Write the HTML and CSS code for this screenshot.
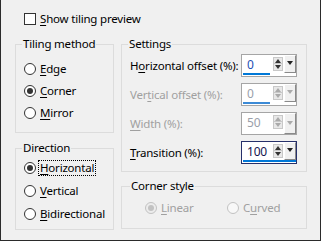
FILE: index.html
```html
<!DOCTYPE html>
<html lang="en">

<head>
  <meta charset="UTF-8">
  <title>Seamless tiling</title>
  <link rel="stylesheet" href="styles.css">
</head>

<body>
  <div class="dialog">
    <label class="check-row">
      <span class="check"></span>
      <span><u>S</u>how tiling preview</span>
    </label>

    <div class="columns">
      <div class="col col-left">
        <fieldset class="group tiling">
          <legend>Tiling method</legend>
          <label class="opt"><span class="radio"></span><span><u>E</u>dge</span></label>
          <label class="opt"><span class="radio on"></span><span><u>C</u>orner</span></label>
          <label class="opt"><span class="radio"></span><span><u>M</u>irror</span></label>
        </fieldset>

        <fieldset class="group direction">
          <legend>Direction</legend>
          <label class="opt"><span class="radio on"></span><span class="focus-ring"><u>H</u>orizontal</span></label>
          <label class="opt"><span class="radio"></span><span><u>V</u>ertical</span></label>
          <label class="opt"><span class="radio"></span><span><u>B</u>idirectional</span></label>
        </fieldset>
      </div>

      <div class="col col-right">
        <fieldset class="group settings">
          <legend>Settings</legend>
          <div class="rows">
            <span class="lbl">H<u>o</u>rizontal offset (%):</span>
            <div class="spin">
              <div class="spin-row">
                <span class="val">0</span>
                <span class="arrows"><i class="up"></i><i class="down"></i></span>
                <span class="drop"><i></i></span>
              </div>
              <i class="bar"></i>
            </div>

            <span class="lbl off">Ver<u>t</u>ical offset (%):</span>
            <div class="spin off">
              <div class="spin-row">
                <span class="val">0</span>
                <span class="arrows"><i class="up"></i><i class="down"></i></span>
                <span class="drop"><i></i></span>
              </div>
              <i class="bar"></i>
            </div>

            <span class="lbl off"><u>W</u>idth (%):</span>
            <div class="spin off">
              <div class="spin-row">
                <span class="val">50</span>
                <span class="arrows"><i class="up"></i><i class="down"></i></span>
                <span class="drop"><i></i></span>
              </div>
            </div>

            <span class="lbl"><u>T</u>ransition (%):</span>
            <div class="spin focus">
              <div class="spin-row">
                <span class="val">100</span>
                <span class="arrows"><i class="up"></i><i class="down"></i></span>
                <span class="drop"><i></i></span>
              </div>
              <i class="bar"></i>
            </div>
          </div>
        </fieldset>

        <fieldset class="group corner">
          <legend>Corner style</legend>
          <div class="pair">
            <label class="opt off"><span class="radio on"></span><span><u>L</u>inear</span></label>
            <label class="opt off"><span class="radio"></span><span>C<u>u</u>rved</span></label>
          </div>
        </fieldset>
      </div>
    </div>
  </div>
</body>

</html>
```

FILE: styles.css
```css
* {
  box-sizing: border-box;
}

body {
  margin: 0;
  font-family: "Noto Sans", "Open Sans", sans-serif;
  font-size: 11.5px;
  letter-spacing: -0.2px;
  line-height: 16px;
  color: #000;
}

u {text-decoration-thickness: 1px; text-underline-offset: 2px}

.dialog {
  width: 321px;
  height: 241px;
  background-color: #f0f0f0;
  border: 1px solid #2b2b2b;
  border-top: none;
  padding: 11px 13px 0 14px;
}

/* checkbox at the top */
.check-row {
  display: flex;
  align-items: center;
  gap: 4px;
  margin-left: 9px;
  height: 16px;
}
.check {
  width: 12px;
  height: 12px;
  border: 1px solid #333;
  background-color: #fff;
}

.columns {
  display: flex;
  gap: 7px;
  margin-top: 9px;
}
.col-left {width: 100px}
.col-right {width: 186px}

/* group boxes */
.group {
  margin: 0;
  min-width: 0;
  border: 1px solid #dcdcdc;
  padding: 0 8px;
}
.group legend {
  padding: 0 1px;
  margin-left: -2px;
  line-height: 16px;
}
.tiling {padding-top: 6px; padding-bottom: 8px}
.direction {margin-top: 7px; padding-bottom: 4px}
.settings {padding: 2px 9px 7px 8px}
.corner {margin-top: 6px; padding: 4px 10px 10px}

/* radio buttons */
.opt {
  display: flex;
  align-items: center;
  gap: 4px;
  height: 22px;
}
.direction .opt {height: 23px}
.radio {
  width: 12px;
  height: 12px;
  flex: none;
  display: grid;
  place-items: center;
  border: 1px solid #333;
  border-radius: 50%;
  background-color: #fff;
}
.radio.on::after {
  content: '';
  width: 6px;
  height: 6px;
  border-radius: 50%;
  background-color: #333;
}
.focus-ring {
  outline: 1px dotted #000;
  outline-offset: 0;
  padding: 0 1px;
  margin-left: -1px;
  line-height: 14px;
}

.pair {
  display: grid;
  grid-template-columns: 82px 82px;
  margin-left: 13px;
}
.pair .opt {height: 20px}
.opt.off {color: #a0a0a0}
.opt.off .radio {border-color: #c2c2c2; background-color: #f8f8f8}
.opt.off .radio.on {background-color: #ececec}
.opt.off .radio.on::after {background-color: #c2c2c2}

/* settings rows */
.rows {
  display: grid;
  grid-template-columns: 1fr 56px;
  row-gap: 6px;
  align-items: center;
}
.lbl {white-space: nowrap}
.lbl.off {color: #a0a0a0}

.spin {
  height: 23px;
  border: 1px solid #a5a5a5;
  background-color: #fff;
  display: flex;
  flex-direction: column;
}
.spin.focus {border-color: #26306a}
.spin-row {
  flex: 1;
  display: flex;
}
.val {
  width: 30px;
  padding: 2px 0 0 5px;
  font-size: 12px;
  color: #1f4fb4;
}
.focus .val {color: #141450}
.spin.off .val {color: #9aa0aa}
.bar {
  display: block;
  height: 3px;
  width: 27px;
  margin: 0 0 1px 1px;
  background-color: #0078d7;
}
.focus .bar {width: auto; margin: 0 0 1px 1px}
.spin.off .bar {background-color: #3b8ad6}

.arrows {
  display: flex;
  flex-direction: column;
  margin: 2px 0 0 2px;
}
.arrows i {
  width: 10px;
  height: 7px;
  display: grid;
  place-items: center;
  background-color: #e8e8e8;
  border: 1px solid #c8c8c8;
}
.arrows .down {border-top: none}
.arrows .up::after {
  content: '';
  border: 3px solid transparent;
  border-top: 0;
  border-bottom: 4px solid #333;
}
.arrows .down::after {
  content: '';
  border: 3px solid transparent;
  border-bottom: 0;
  border-top: 4px solid #333;
}
.drop {
  width: 12px;
  margin-left: 1px;
  display: grid;
  place-items: center;
  background-color: #f0f0f0;
  border: 1px solid;
  border-color: #fff #8a8a8a #8a8a8a #fff;
}
.drop i {
  border: 3px solid transparent;
  border-bottom: 0;
  border-top: 4px solid #222;
  margin-top: -2px;
}
.spin.off .arrows i::after {border-top-color: #aaa; border-bottom-color: #aaa}
.spin.off .arrows .up::after {border-top-color: transparent}
.spin.off .arrows .down::after {border-bottom-color: transparent}
.spin.off .drop i {border-top-color: #aaa}
```
